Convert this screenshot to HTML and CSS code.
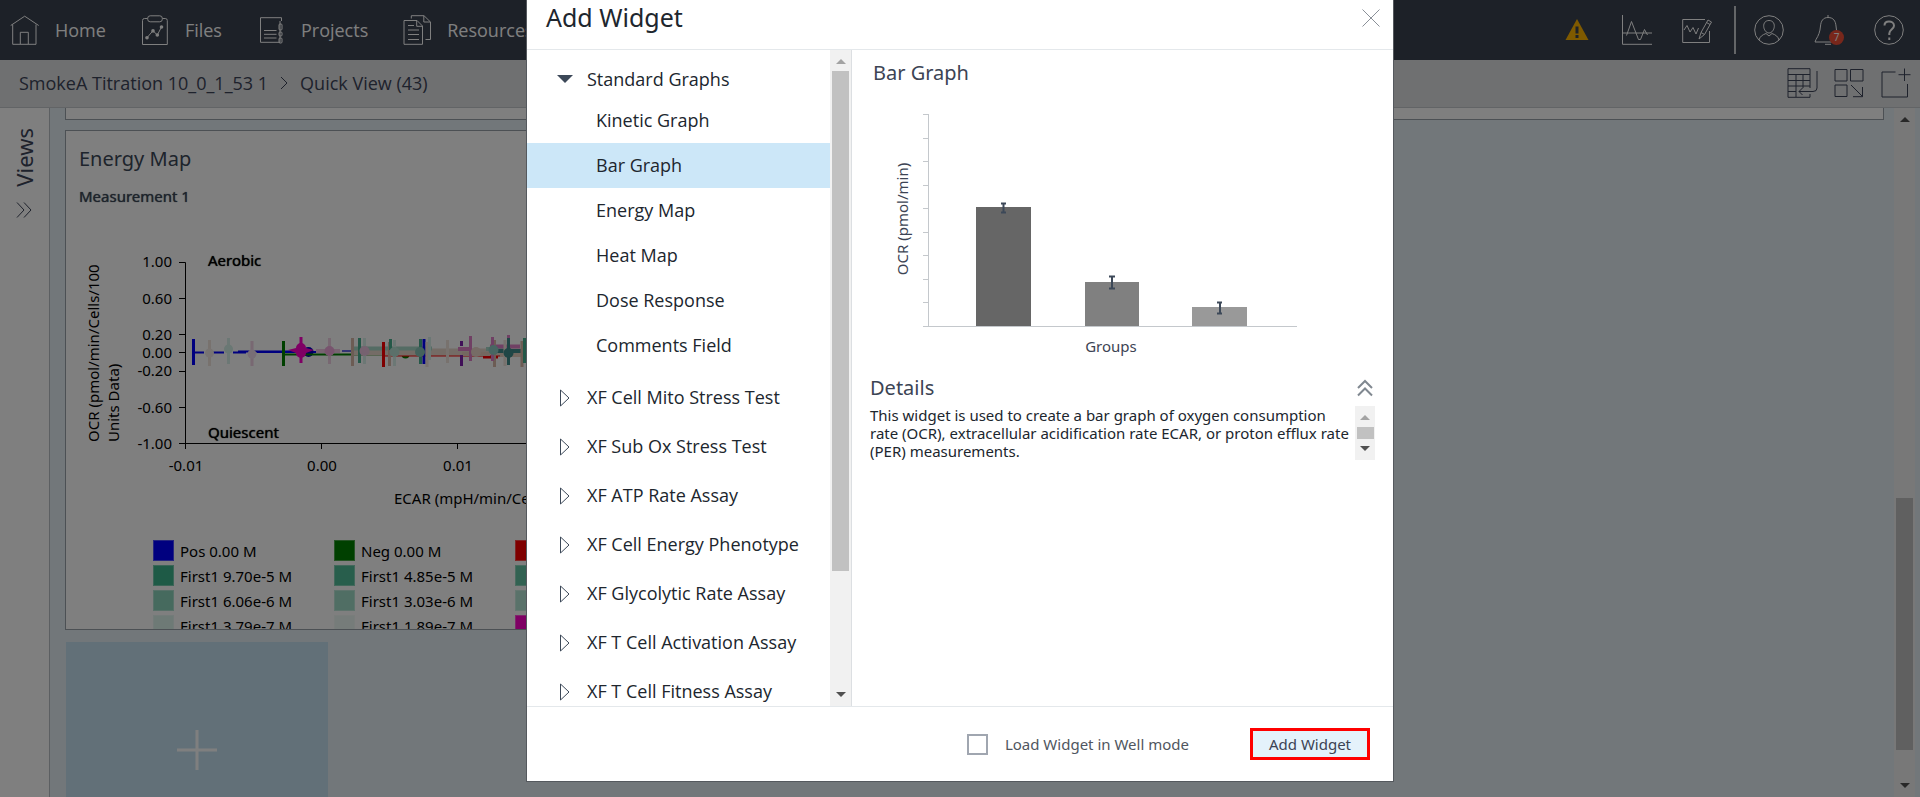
FILE: index.html
```html
<!DOCTYPE html>
<html lang="en">
<head>
<meta charset="utf-8">
<title>Quick View</title>
<meta name="viewport" content="width=device-width, initial-scale=1">
<link rel="stylesheet" href="styles.css">
</head>
<body>
<div class="app">
  <header class="topbar">
    <nav class="nav">
      <a class="nav-item" href="#home"><svg class="icon" viewBox="0 0 30 30"><path d="M.7 10.5 14.7 1.2 28.7 10.5M2.7 9.5V29.3H26V9.5M10.3 29V17.3H18.3V29"/></svg>Home</a>
      <a class="nav-item" href="#files"><svg class="icon" viewBox="0 0 30 30"><path d="M7.5 3.5H4.5a2 2 0 0 0-2 2V29.5H27.3V5.5a2 2 0 0 0-2-2H22.5M7 22.7 13 15.7 17.3 20 21.5 12"/><rect x="7.7" y=".8" width="14.6" height="6" rx="2.5"/><g class="solid"><circle cx="7" cy="22.7" r="1.8"/><circle cx="13" cy="15.9" r="1.8"/><circle cx="17.3" cy="20" r="1.8"/><circle cx="21.5" cy="12" r="1.8"/></g></svg>Files</a>
      <a class="nav-item" href="#projects"><svg class="icon" viewBox="0 0 30 30"><path d="M25.5 6V2.7H4.5V27.3H24V6M8 15.5H20.5M8 19.3H20.5M8 23H20.5"/><rect x="23" y="9" width="3" height="6" rx="1"/><rect x="23" y="17" width="3" height="4" rx="1"/><rect x="23" y="23" width="3" height="5" rx="1"/></svg>Projects</a>
      <a class="nav-item" href="#resources"><svg class="icon" viewBox="0 0 30 30"><path d="M2 5.5H15L20.5 11V29.3H2ZM14.7 5.5V11.3H20.5M9.3 3.5V.7H22L28.5 7V24.5H23.5M21.8 1V7H28.5M6 10.5H12M6 15H17M6 19.5H17M6 24.5H17"/></svg>Resources</a>
    </nav>
    <div class="tools">
      <button class="tool" aria-label="Warnings"><svg class="icon" viewBox="0 0 30 30"><path class="warn" d="M15 4 26.5 25H3.5Z"/><path class="warn-mark" d="M15 11.5V18.5M15 20V23"/></svg></button>
      <button class="tool tool-wide" aria-label="Traces"><svg class="icon" viewBox="0 0 30 30"><path d="M.5 0V29.3H30M0 18H30M4.5 20.5 9.5 6.5 16.5 24.5H18.5L22.5 14.5 25.5 20"/></svg></button>
      <button class="tool tool-wide" aria-label="Edit chart"><svg class="icon" viewBox="0 0 30 30"><path d="M23 4.5H.7V27.5H27.5V16M2 15 5 10.5 8 17 11 12.5 14 19 16.5 13"/><path d="M17 24 19 17.5 26 5 29.5 7 22.5 19.5 17 24M19 17.5 22.5 19.5M24.5 7.5 28 9.5"/></svg></button>
      <span class="divider"></span>
      <button class="tool" aria-label="Account"><svg class="icon" viewBox="0 0 30 30"><circle cx="15" cy="15" r="14.3"/><path d="M15 5.5C11.5 5.5 9.5 8 9.7 11.5 9.9 14.5 12 18 15 18S20.1 14.5 20.3 11.5C20.5 8 18.5 5.5 15 5.5M5 25C6 21.5 8 20 12 18.5L15 21 18 18.5C22 20 24 21.5 25 25"/></svg></button>
      <button class="tool tool-wide alerts" aria-label="Notifications, 7 new"><svg class="icon" viewBox="0 0 30 30"><path d="M14 0V2.5M14 2.5C9 2.5 7 6 6.5 11 6 17 4.5 20.5 2 24.5L1 27H27L26 24.5C23.5 20.5 22.5 17 22 11 21.5 6 19.5 2.5 14 2.5M11 29.3H17"/></svg><span class="badge">7</span></button>
      <button class="tool tool-wide" aria-label="Help"><svg class="icon" viewBox="0 0 30 30"><circle cx="15" cy="15" r="14.3"/><path class="bold" d="M10.5 10.5C10.5 8 12.5 6.5 15 6.5S20 8 20 10.7C20 14 15.3 14.5 15.3 18.5V20M15.3 22.5V25"/></svg></button>
    </div>
  </header>

  <div class="subbar">
    <nav class="crumbs">
      <a href="#project">SmokeA Titration 10_0_1_53 1</a>
      <svg class="crumb-arrow" viewBox="0 0 8 14"><path d="M1 1 7 7 1 13"/></svg>
      <a href="#view">Quick View (43)</a>
    </nav>
    <div class="actions">
      <button class="tool" aria-label="Export table"><svg class="icon" viewBox="0 0 30 30"><path d="M23 20V.7H1V29.3H23V26M1 6.5H23M1 12.5H23M1 18H23M1 23.5H9M9 6.5V29M16 6.5V20M30 3V20Q30 23.5 26 23.5H12M15.5 20 12 23.5 15.5 27"/></svg></button>
      <button class="tool" aria-label="Arrange"><svg class="icon" viewBox="0 0 30 30"><path d="M1 1.5H13V13H1ZM16.5 1.5H29V13H16.5ZM1 17H13V28.5H1ZM17 17 28.5 28.5M28.5 19V28.7H19"/></svg></button>
      <button class="tool" aria-label="Add view"><svg class="icon" viewBox="0 0 30 30"><path d="M14.5 4H1V29H26.5V16M23.5 .5V13M17.5 6.7H29.5"/></svg></button>
    </div>
  </div>

  <div class="workspace">
    <aside class="sidebar">
      <span class="sidebar-label">Views</span>
      <button class="expand" aria-label="Expand views"><svg viewBox="0 0 16 16"><path d="M1 .5 8 8 1 15.5M8 .5 15 8 8 15.5"/></svg></button>
    </aside>
    <main class="canvas">
      <section class="card card-above"></section>
      <section class="card map-card">
        <h2>Energy Map</h2>
        <h3>Measurement 1</h3>
        <svg class="map" viewBox="66 220 640 290" role="img" aria-label="Energy map">
          <g class="axis">
            <path d="M179 262.5H185.5V449M179 298.5H185M179 334.5H185M179 352.5H185M179 371.5H185M179 407.5H185M179 443.5H700M321.5 443V449M457.5 443V449"/>
          </g>
          <g class="tick end"><text x="172" y="267">1.00</text><text x="172" y="304">0.60</text><text x="172" y="340">0.20</text><text x="172" y="358">0.00</text><text x="172" y="376">-0.20</text><text x="172" y="413">-0.60</text><text x="172" y="449">-1.00</text></g>
          <g class="tick mid"><text x="186" y="471">-0.01</text><text x="322" y="471">0.00</text><text x="458" y="471">0.01</text></g>
          <g class="tick"><text x="394" y="504">ECAR (mpH/min/Cells/100</text>
            <text transform="translate(99 442) rotate(-90)">OCR (pmol/min/Cells/100</text>
            <text transform="translate(119 442) rotate(-90)">Units Data)</text></g>
          <g class="zone"><text x="208" y="266">Aerobic</text><text x="208" y="438">Quiescent</text></g>
          <g class="marks">
            <path stroke="#0000ff" d="M193 352.5H204M213 352.5H224M233 352.5H246M257 352H321"/><path stroke="#0000ff" d="M238 351.5H296"/>
            <path stroke="#6a6ae8" d="M342 351H362"/>
            <circle cx="308.5" cy="352" r="5" fill="#0000c0"/>
            <path stroke="#008000" d="M284 354.5H405"/><circle cx="405.5" cy="354.5" r="4" fill="#008000"/>
            <path stroke="#ff0000" d="M384 355.5H530M483 357.5H498"/>
            <path class="thick" stroke="#f0c8e4" d="M316 351H340M358 351H375"/>
            <path class="wide" stroke="#e8d8cc" d="M352 352H530"/>
            <path class="thick" stroke="#a8d8c8" d="M352 348.5H432M486 349H505"/>
            <path class="thick" stroke="#e080c8" d="M458 349H472M490 346.5H520"/>
            <path class="thick" stroke="#408c8c" d="M497 351H522"/>
            <path class="thick" stroke="#e8d0c0" d="M462 354H490M500 355H530"/>
            <path class="bar" stroke="#0000ff" d="M193.5 339V365M424 339V364"/>
            <path class="bar" stroke="#008000" d="M283.5 341V366"/>
            <path class="bar" stroke="#ff0000" d="M383.5 342V367"/>
            <path class="bar" stroke="#8020b0" d="M461.5 341V346M461.5 355V366"/>
            <path class="bar" stroke="#f0e4dc" d="M209.5 340V366M447.5 340V363M427 342V367M505 340V366"/>
            <path class="bar" stroke="#d8f0ea" d="M228.5 338V364M364.5 338V364M394.5 340V366M429.5 337V360"/>
            <path class="bar" stroke="#f0d0e4" d="M252 341V366M329.5 338V364"/>
            <path class="bar" stroke="#d8b8a8" d="M352.5 338V366M389.5 342V366M494.5 340V367M522 341V367"/>
            <path class="bar" stroke="#48b090" d="M359.5 338V363M390.5 339V350M420.5 339V364M524.5 338V363"/>
            <path class="bar" stroke="#e080c8" d="M470.5 336V361M492.5 337V361M508.5 335V340"/>
            <path class="bar" stroke="#408c8c" d="M508.5 338V365"/>
            <path class="bar" stroke="#ff00c8" d="M301 337V363"/>
            <path fill="#ff00c8" d="M288 350 296 348A5 5 0 0 1 306 348L314 350 306 353A5 5 0 0 1 296 353Z"/>
            <g><circle cx="209.5" cy="353" r="4.5" fill="#f0e8e4"/><circle cx="228.5" cy="349" r="4.5" fill="#d4f0e8"/><circle cx="252" cy="354" r="4.5" fill="#f0dcec"/><circle cx="329.5" cy="351" r="5" fill="#f0a8dc"/><circle cx="364.5" cy="351" r="5" fill="#ecc4e0"/><circle cx="394.5" cy="352" r="5" fill="#b8e0d4"/><circle cx="420" cy="352" r="5" fill="#88c4b8"/><circle cx="476" cy="352" r="5" fill="#ecd8cc"/><circle cx="493.5" cy="350" r="5" fill="#90ccc4"/><circle cx="508.5" cy="353" r="5" fill="#408c8c"/></g>
          </g>
        </svg>
        <ul class="legend">
          <li><i style="background:#0000ff"></i>Pos 0.00 M</li><li><i style="background:#008000"></i>Neg 0.00 M</li><li><i style="background:#ff0000"></i></li>
          <li><i style="background:#3cb48c"></i>First1 9.70e-5 M</li><li><i style="background:#50bc98"></i>First1 4.85e-5 M</li><li><i style="background:#64c4a4"></i></li>
          <li><i style="background:#8cd4bc"></i>First1 6.06e-6 M</li><li><i style="background:#a0dcc8"></i>First1 3.03e-6 M</li><li><i style="background:#b4e4d4"></i></li>
          <li><i style="background:#dcf4ec"></i>First1 3.79e-7 M</li><li><i style="background:#ecf8f4"></i>First1 1.89e-7 M</li><li><i style="background:#ff00c8"></i></li>
        </ul>
      </section>
      <button class="add-tile" aria-label="Add widget tile"><svg viewBox="0 0 40 40"><path d="M20 0V40M0 20H40"/></svg></button>
    </main>
    <div class="scroll page-scroll"><i class="up dark"></i><span class="page-thumb"></span><i class="down"></i></div>
  </div>
</div>

<div class="overlay">
  <div class="modal" role="dialog" aria-labelledby="dlg-title">
    <div class="modal-head">
      <h1 id="dlg-title">Add Widget</h1>
      <button class="close" aria-label="Close"><svg viewBox="0 0 18 18"><path d="M.5 .5 17.5 17.5M17.5 .5 .5 17.5"/></svg></button>
    </div>
    <div class="modal-body">
      <div class="tree">
        <button class="group open"><svg viewBox="0 0 16 16"><path class="fill" d="M0 4H16L8 12Z"/></svg>Standard Graphs</button>
        <div class="options">
          <button class="option">Kinetic Graph</button>
          <button class="option selected">Bar Graph</button>
          <button class="option">Energy Map</button>
          <button class="option">Heat Map</button>
          <button class="option">Dose Response</button>
          <button class="option">Comments Field</button>
        </div>
        <button class="group"><svg viewBox="0 0 16 16"><path d="M3.5 1V17L12 9Z"/></svg>XF Cell Mito Stress Test</button>
        <button class="group"><svg viewBox="0 0 16 16"><path d="M3.5 1V17L12 9Z"/></svg>XF Sub Ox Stress Test</button>
        <button class="group"><svg viewBox="0 0 16 16"><path d="M3.5 1V17L12 9Z"/></svg>XF ATP Rate Assay</button>
        <button class="group"><svg viewBox="0 0 16 16"><path d="M3.5 1V17L12 9Z"/></svg>XF Cell Energy Phenotype</button>
        <button class="group"><svg viewBox="0 0 16 16"><path d="M3.5 1V17L12 9Z"/></svg>XF Glycolytic Rate Assay</button>
        <button class="group"><svg viewBox="0 0 16 16"><path d="M3.5 1V17L12 9Z"/></svg>XF T Cell Activation Assay</button>
        <button class="group"><svg viewBox="0 0 16 16"><path d="M3.5 1V17L12 9Z"/></svg>XF T Cell Fitness Assay</button>
      </div>
      <div class="scroll tree-scroll"><i class="up"></i><span class="tree-thumb"></span><i class="down"></i></div>
      <div class="preview">
        <h2 class="preview-title">Bar Graph</h2>
        <svg class="sample" viewBox="870 89 505 283" role="img" aria-label="Sample bar graph">
          <g class="sample-axis"><path d="M928.5 114V327M923 326.5H1297M923 114.5H928M923 138.5H928M923 161.5H928M923 185.5H928M923 208.5H928M923 232.5H928M923 255.5H928M923 279.5H928M923 302.5H928"/></g>
          <g class="bars"><rect x="976" y="207" width="55" height="119" fill="#666"/>
          <rect x="1085" y="282" width="54" height="44" fill="#808080"/>
          <rect x="1192" y="307" width="55" height="19" fill="#999"/></g>
          <g class="error"><path d="M1003.5 203V213M1001 203.5H1006M1001 212.5H1006M1112 276V289M1109 276.5H1115M1109 288.5H1115M1220 302V313M1217 302.5H1222M1217 313.5H1222"/></g>
          <text x="1111" y="352" text-anchor="middle">Groups</text>
          <text text-anchor="middle" transform="translate(908 219) rotate(-90)">OCR (pmol/min)</text>
        </svg>
        <div class="details-head"><h2>Details</h2><button class="collapse" aria-label="Collapse details"><svg viewBox="0 0 16 16"><path d="M1 8 8 1 15 8M1 15.5 8 8.5 15 15.5"/></svg></button></div>
        <div class="details">
          <p>This widget is used to create a bar graph of oxygen consumption rate (OCR), extracellular acidification rate ECAR, or proton efflux rate (PER) measurements.</p>
          <div class="scroll small-scroll"><i class="up"></i><span class="small-thumb"></span><i class="down"></i></div>
        </div>
      </div>
    </div>
    <div class="modal-foot">
      <label class="check"><input type="checkbox">Load Widget in Well mode</label>
      <button class="submit">Add Widget</button>
    </div>
  </div>
</div>
</body>
</html>
```

FILE: styles.css
```css
* { box-sizing: border-box; }
body { margin: 0; height: 100vh; overflow: hidden; font-family: "Noto Sans", "Open Sans", sans-serif; font-size: 18px; color: #000; }
button { border: 0; padding: 0; background: none; font: inherit; color: inherit; cursor: pointer; }
a { color: inherit; text-decoration: none; }
h1, h2, h3, p, ul { margin: 0; padding: 0; font-weight: 400; list-style: none; }
svg { display: block; fill: none; stroke: currentColor; overflow: visible; }
.app { display: flex; flex-direction: column; height: 100%; }

.topbar { flex: none; display: flex; justify-content: space-between; align-items: center; height: 60px; padding: 0 16px 0 10px; background: #3a4250; color: #fff; }
.nav { display: flex; gap: 34px; font-family: "Open Sans", "Noto Sans", sans-serif; }
.nav-item { display: flex; align-items: center; gap: 15px; }
.icon { width: 30px; height: 30px; }
.solid { fill: currentColor; stroke: none; }
.bold { stroke-width: 2; }
.tools { display: flex; align-items: center; }
.tool { flex: none; }
.tool-wide { margin-left: 30px; }
.warn { fill: #ffb400; stroke: none; }
.warn-mark { stroke: #3a4250; stroke-width: 3; }
.divider { width: 2px; height: 48px; margin: 0 18px 0 22px; background: #c8ccd0; }
.alerts { position: relative; }
.badge { position: absolute; right: 0; bottom: 0; width: 15px; height: 15px; border-radius: 50%; background: #f04e37; font-size: 10px; line-height: 15px; text-align: center; }

.subbar { flex: none; display: flex; justify-content: space-between; align-items: center; height: 48px; padding: 0 9px 2px 19px; border-bottom: 1px solid #c4c8cc; background: #dfe0e3; color: #3c4458; }
.crumbs { display: flex; align-items: center; gap: 12px; font-family: "Open Sans", "Noto Sans", sans-serif; }
.crumb-arrow { width: 8px; height: 14px; }
.actions { display: flex; gap: 17px; color: #3c4458; }

.workspace { flex: 1; display: flex; min-height: 0; background: #e4eef4; }
.sidebar { flex: none; display: flex; flex-direction: column; align-items: center; gap: 15px; width: 50px; padding: 20px 2px 0 0; border-right: 1px solid #b8bec4; background: #fff; color: #3c4458; }
.sidebar-label { font-size: 22px; line-height: 28px; writing-mode: vertical-rl; transform: rotate(180deg); }
.expand svg { width: 16px; height: 16px; }
.canvas { flex: 1; min-width: 0; overflow: hidden; padding: 0 10px 0 15px; }
.card { border: 1px solid #98a0a8; background: #fff; overflow: hidden; }
.card-above { height: 12px; border-top: 0; }
.map-card { width: 50%; height: 500px; margin-top: 10px; padding-top: 12px; }
.map-card h2 { padding-left: 13px; font-size: 20px; line-height: 32px; color: #3c4858; }
.map-card h3 { padding: 9px 0 12px 13px; font-size: 15px; line-height: 24px; color: #3c4858; text-shadow: 0 0 1px currentColor; }
.map { width: 640px; height: 290px; font-size: 15px; }
.map text, .sample text { fill: currentColor; stroke: none; }
.axis { stroke: #000; }
.end { text-anchor: end; }
.mid { text-anchor: middle; }
.zone { text-shadow: 0 0 1px currentColor; }
.marks { stroke: none; }
.marks path { stroke-width: 2; }
.marks .thick { stroke-width: 4; }
.marks .wide { stroke-width: 7; }
.marks .bar { stroke-width: 3; }
.legend { display: grid; grid-template-columns: repeat(3, 181px); grid-auto-rows: 25px; padding: 28px 0 0 87px; font-size: 15px; }
.legend li { display: flex; align-items: center; gap: 6px; }
.legend i { width: 21px; height: 21px; border: 1px solid rgba(255, 255, 255, .3); }
.add-tile { display: flex; justify-content: center; width: 262px; height: 216px; margin: 12px 0 0 1px; padding-top: 88px; background: #c4e0f0; color: #fff; }
.add-tile svg { width: 40px; height: 40px; stroke-width: 3; }

.scroll { flex: none; display: flex; flex-direction: column; align-items: center; background: #f1f1f1; }
.scroll span { width: 17px; background: #c1c1c1; }
.scroll i { border: 5px solid transparent; border-top: 0; }
.scroll .up { border-bottom-color: #a3a3a3; }
.scroll .dark { border-bottom-color: #505050; }
.scroll .down { margin-top: auto; border-top: 5px solid #505050; border-bottom: 0; }
.page-scroll { width: 21px; margin-right: 5px; padding: 9px 0; }
.page-thumb { height: 252px; margin-top: 376px; }
.tree-scroll { width: 22px; padding: 9px 0; border-right: 1px solid #dcdfe2; }
.tree-thumb { height: 500px; margin-top: 7px; }
.small-scroll { width: 20px; height: 54px; padding: 9px 0; }
.small-thumb { height: 12px; margin-top: 7px; }

.overlay { position: fixed; inset: 0; display: flex; justify-content: center; align-items: flex-start; background: rgba(0, 0, 0, .5); }
.modal { display: flex; flex-direction: column; width: 868px; max-width: 100%; height: calc(100% - 15px); border: 1px solid #55595e; border-top: 0; background: #fff; color: #20262e; }
.modal-head { flex: none; display: flex; justify-content: space-between; height: 50px; padding: 0 13px 0 19px; border-bottom: 1px solid #e4e8eb; }
.modal-head h1 { font-size: 25px; line-height: 34px; }
.close { height: 36px; color: #8a9098; }
.close svg { width: 18px; height: 18px; }
.modal-body { flex: 1; display: flex; min-height: 0; }
.tree { width: 303px; flex: none; overflow: hidden; padding-top: 10px; font-family: "Open Sans", "Noto Sans", sans-serif; }
.group { display: flex; align-items: center; gap: 14px; width: 100%; height: 49px; padding-left: 30px; }
.group svg { width: 16px; height: 16px; color: #3c4858; }
.group .fill { fill: currentColor; stroke: none; }
.open { height: 38px; }
.options { margin-bottom: 4px; }
.option { display: block; width: 100%; height: 45px; padding: 0 0 1px 69px; text-align: left; }
.selected { background: #cce7f8; }
.preview { flex: 1; min-width: 0; padding: 7px 18px 0 18px; color: #3c4454; }
.preview h2 { font-size: 20px; line-height: 32px; }
.preview .preview-title { padding-left: 3px; }
.sample { width: 100%; height: auto; font-size: 15px; }
.sample-axis { stroke: #c4c8cc; }
.bars { stroke: none; }
.error { stroke: #3c4858; stroke-width: 2; }
.details-head { display: flex; justify-content: space-between; align-items: center; }
.collapse { padding-right: 2px; color: #808890; }
.collapse svg { width: 16px; height: 16px; stroke-width: 2; }
.details { display: flex; justify-content: space-between; padding-top: 2px; color: #20262e; }
.details p { flex: 1; font-size: 15px; line-height: 18px; }
.modal-foot { flex: none; display: flex; justify-content: flex-end; align-items: center; gap: 61px; height: 75px; padding: 0 23px 0 0; border-top: 1px solid #e4e8eb; color: #505660; font-size: 15px; }
.check { display: flex; align-items: center; gap: 17px; }
.check input { appearance: none; width: 21px; height: 21px; margin: 0; border: 2px solid #a0a6b0; background: #fff; }
.submit { width: 120px; height: 32px; border: 3px solid #f00; background: #e4f2fb; color: #3c4454; }
```
